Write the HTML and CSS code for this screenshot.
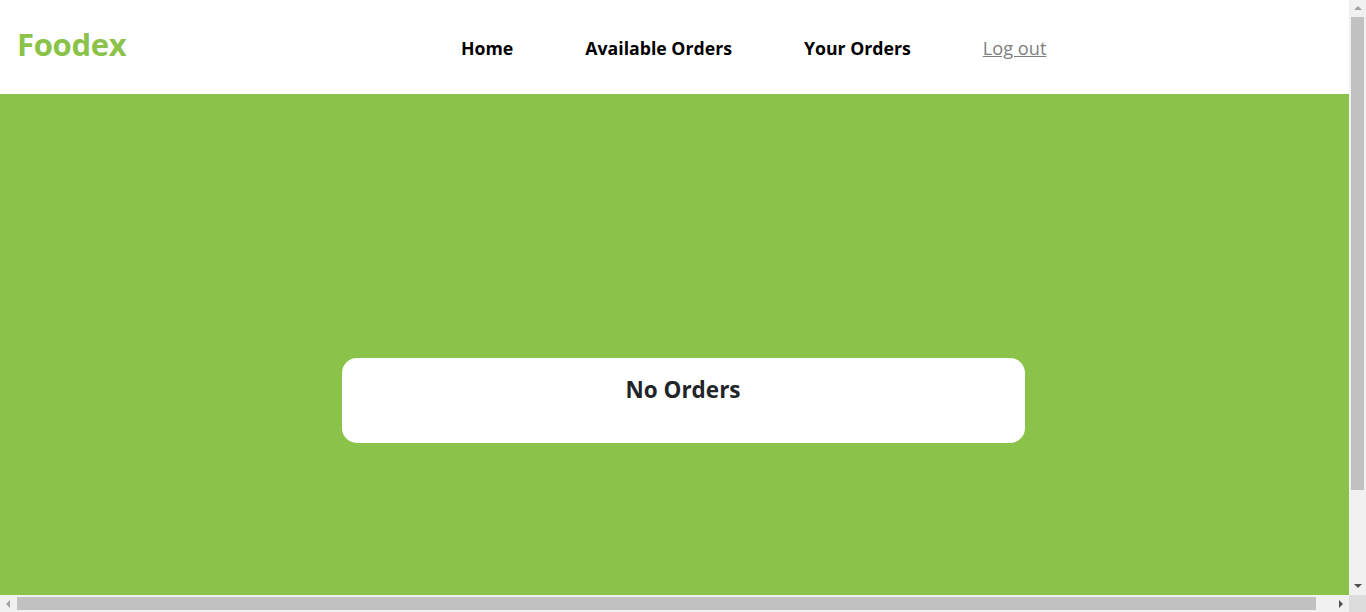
FILE: index.html
```html
<!DOCTYPE html>
<html lang="en">
<head>
<meta charset="utf-8">
<title>Foodex</title>
<link rel="stylesheet" href="styles.css">
</head>
<body>
<header class="topbar">
  <div class="brand">Foodex</div>
  <nav class="nav">
    <a class="nav-link" href="#">Home</a>
    <a class="nav-link" href="#">Available Orders</a>
    <a class="nav-link" href="#">Your Orders</a>
    <a class="nav-logout" href="#">Log out</a>
  </nav>
</header>
<main class="stage">
  <section class="card">
    <h3 class="card-title">No Orders</h3>
  </section>
</main>

<div class="vscroll" aria-hidden="true">
  <span class="arrow arrow-up"></span>
  <span class="vthumb"></span>
  <span class="arrow arrow-down"></span>
</div>
<div class="hscroll" aria-hidden="true">
  <span class="arrow arrow-left"></span>
  <span class="hthumb"></span>
  <span class="arrow arrow-right"></span>
</div>
<div class="corner" aria-hidden="true"></div>
</body>
</html>
```
FILE: styles.css
```css
* { box-sizing: border-box; }
html, body { margin: 0; padding: 0; }
body {
  font-family: "Open Sans", "Noto Sans", sans-serif;
  background: #fff;
  color: #212529;
  overflow: hidden;
}
.topbar {
  height: 94px;
  display: flex;
  align-items: center;
  padding-left: 17px;
  background: #fff;
}
.brand {
  color: #8bc34a;
  font-weight: 700;
  font-size: 31px;
  letter-spacing: -0.3px;
  width: 426px;
  margin-top: -6px;
}
.nav {
  display: flex;
  align-items: center;
  gap: 72px;
  padding-left: 18px;
  margin-top: 2px;
}
.nav-link {
  color: #000;
  text-decoration: none;
  font-weight: 700;
  font-size: 17.7px;
}
.nav-logout {
  color: #808080;
  font-size: 18.2px;
  text-decoration: underline;
}
.stage {
  width: 100vw;
  height: 100vh;
  background: #8bc34a;
  display: flex;
  align-items: center;
  justify-content: center;
}
.card {
  width: 50%;
  height: 85px;
  background: #fff;
  border-radius: 15px;
  padding-top: 16px;
}
.card-title {
  margin: 0;
  text-align: center;
  font-size: 22.5px;
  font-weight: 700;
  color: #212529;
}

/* simulated browser scrollbars (overlay) */
.vscroll {
  position: fixed;
  top: 0;
  right: 0;
  width: 17px;
  height: 595px;
  background: #f1f1f1;
}
.vthumb {
  position: absolute;
  left: 2px;
  top: 17px;
  width: 13px;
  height: 473px;
  background: #c1c1c1;
}
.hscroll {
  position: fixed;
  left: 0;
  bottom: 0;
  width: 1349px;
  height: 17px;
  background: #f1f1f1;
}
.hthumb {
  position: absolute;
  left: 17px;
  top: 2px;
  width: 1299px;
  height: 13px;
  background: #c1c1c1;
}
.corner {
  position: fixed;
  right: 0;
  bottom: 0;
  width: 17px;
  height: 17px;
  background: #dcdcdc;
}
.arrow {
  position: absolute;
  width: 0;
  height: 0;
  border-style: solid;
  border-color: transparent;
}
.arrow-up {
  left: 5px;
  top: 6px;
  border-width: 0 4px 4px 4px;
  border-bottom-color: #a3a3a3;
}
.arrow-down {
  left: 5px;
  bottom: 7px;
  border-width: 4px 4px 0 4px;
  border-top-color: #505050;
}
.arrow-left {
  left: 6px;
  top: 5px;
  border-width: 4px 4px 4px 0;
  border-right-color: #a3a3a3;
}
.arrow-right {
  right: 6px;
  top: 5px;
  border-width: 4px 0 4px 4px;
  border-left-color: #505050;
}
```
